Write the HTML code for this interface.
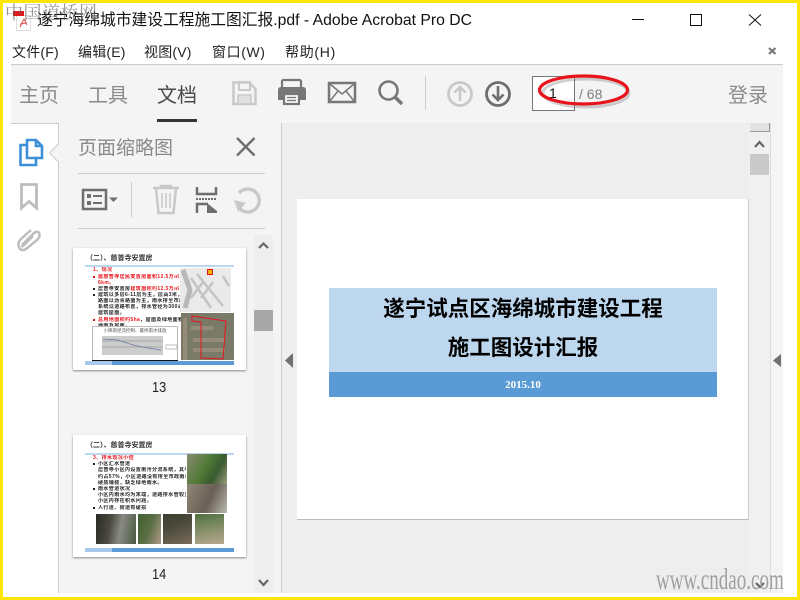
<!DOCTYPE html>
<html><head><meta charset="utf-8">
<style>
html,body{margin:0;padding:0;width:800px;height:600px;overflow:hidden;background:#fff;font-family:"Liberation Sans","Noto Sans CJK SC",sans-serif}
.a{position:absolute;white-space:nowrap}
svg{position:absolute;overflow:visible}
.t{position:absolute;left:25px;width:88px;overflow:hidden;white-space:nowrap;font-size:5px;line-height:6px;font-weight:bold;color:#222;letter-spacing:.4px}
.r{color:#e8141c}
.b{position:absolute;left:20px;width:2px;height:2px;background:#222}
</style></head><body>
<div class="a" style="left:0;top:0;width:800px;height:600px;background:#fff"></div>

<!-- title -->
<div class="a" style="left:37px;top:10px;font-size:15.750px;line-height:22px;color:#111">遂宁海绵城市建设工程施工图汇报.pdf - Adobe Acrobat Pro DC</div>
<!-- file icon -->
<div class="a" style="left:16px;top:15px;width:13px;height:14px;background:#fff;border:1px solid #ddd"></div>
<div class="a" style="left:13px;top:11px;width:11px;height:5px;background:#e8141c"></div>
<svg style="left:0;top:0" width="800" height="600"><path d="M20 27 L24 19 L27 25 M20 24 L27 23" stroke="#e05050" stroke-width="1" fill="none"/></svg>
<!-- window buttons -->
<svg style="left:0;top:0" width="800" height="600" fill="none" stroke="#111" stroke-width="1">
<path d="M632 19.5H644"/><rect x="690.5" y="14.5" width="11" height="11"/><path d="M749 14.5 L761 25.5 M761 14.5 L749 25.5"/>
<path d="M769 48 L775.500 54 M775.500 48 L769 54" stroke="#777" stroke-width="2.200"/>
</svg>
<!-- menu -->
<div class="a" style="left:12px;top:42px;font-size:14px;line-height:20px;color:#222;letter-spacing:.2px">文件(F)</div>
<div class="a" style="left:78px;top:42px;font-size:14px;line-height:20px;color:#222;letter-spacing:.2px">编辑(E)</div>
<div class="a" style="left:144px;top:42px;font-size:14px;line-height:20px;color:#222;letter-spacing:.2px">视图(V)</div>
<div class="a" style="left:212px;top:42px;font-size:14px;line-height:20px;color:#222;letter-spacing:.6px">窗口(W)</div>
<div class="a" style="left:285px;top:42px;font-size:14px;line-height:20px;color:#222;letter-spacing:.7px">帮助(H)</div>

<!-- toolbar -->
<div class="a" style="left:11px;top:64px;width:772px;height:58px;background:#f4f4f4;border-top:1px solid #ccc;border-bottom:1px solid #ccc"></div>
<div class="a" style="left:19px;top:82px;font-size:20px;line-height:28px;color:#8a8a8a">主页</div>
<div class="a" style="left:88px;top:82px;font-size:20px;line-height:28px;color:#8a8a8a">工具</div>
<div class="a" style="left:157px;top:82px;font-size:20px;line-height:28px;color:#4a4a4a">文档</div>
<div class="a" style="left:157px;top:119px;width:40px;height:3px;background:#333"></div>
<!-- toolbar icons -->
<svg style="left:0;top:0" width="800" height="600" fill="none">
<path d="M233.500 82.500H249L255.500 89V104H233.500Z" stroke="#c9c9c9" stroke-width="2.500"/>
<rect x="239" y="82" width="11" height="8" stroke="#c9c9c9" stroke-width="2"/>
<rect x="238" y="95" width="13" height="9" fill="#e0e0e0" stroke="#c9c9c9" stroke-width="1.500"/>
<rect x="282" y="80" width="19" height="9" rx="1.500" stroke="#777" stroke-width="2.200"/>
<path d="M281 87H303Q306 87 306 90V100H278V90Q278 87 281 87Z" fill="#777"/>
<rect x="284" y="94" width="15" height="10" fill="#f4f4f4" stroke="#777" stroke-width="2.200"/>
<path d="M287 97.500H296M287 100.500H296" stroke="#777" stroke-width="1.200"/>
<rect x="329" y="83" width="26" height="19" stroke="#777" stroke-width="2.500"/>
<path d="M330 84L342 94L354 84M330 101L338 91M354 101L346 91" stroke="#777" stroke-width="1.500"/>
<circle cx="388.500" cy="90.500" r="9" stroke="#777" stroke-width="2.600"/>
<path d="M395 97L402 104" stroke="#777" stroke-width="3.500"/>
<path d="M425.500 76V110" stroke="#ccc"/>
<circle cx="460" cy="94" r="11.500" stroke="#c9c9c9" stroke-width="2.800"/>
<path d="M460 101V87M454.500 92.500L460 87L465.500 92.500" stroke="#c9c9c9" stroke-width="2.600"/>
<circle cx="498" cy="94" r="11.500" stroke="#6e6e6e" stroke-width="2.800"/>
<path d="M498 86V100M492.500 94.500L498 100L503.500 94.500" stroke="#6e6e6e" stroke-width="2.600"/>
</svg>
<!-- page box -->
<div class="a" style="left:532px;top:76px;width:41px;height:33px;background:#fff;border:1px solid #777"></div>
<div class="a" style="left:549px;top:83px;font-size:14px;line-height:20px;color:#111">1</div>
<div class="a" style="left:579px;top:84px;font-size:14px;line-height:20px;color:#808080">/ 68</div>
<svg style="left:0;top:0" width="800" height="600" fill="none">
<ellipse cx="586" cy="93" rx="43" ry="14" stroke="#777" stroke-width="3" opacity=".35"/>
<ellipse cx="583.500" cy="90" rx="44" ry="14" stroke="#e8141c" stroke-width="3.200"/>
</svg>
<div class="a" style="left:728px;top:82px;font-size:20px;line-height:28px;color:#8a8a8a">登录</div>

<!-- left rail -->
<div class="a" style="left:58px;top:123px;width:1px;height:470px;background:#ccc"></div>
<svg style="left:0;top:0" width="800" height="600" fill="none">
<path d="M26 145H20.500V165H36V159" stroke="#3d8fd9" stroke-width="2.600"/>
<path d="M27 140H36L42 146V158H27Z M36 140V146H42" stroke="#3d8fd9" stroke-width="2.600" fill="#fff"/>
<path d="M21.500 184.500H36.500V208L29 201.500L21.500 208Z" stroke="#bdbdbd" stroke-width="2.800"/>
<path d="M33 236L24 245Q21 248 23 244L33 234Q37 230 39 233Q41 236 37 240L26 249Q21 252 19 247Q17 243 21 239L31 230" stroke="#bdbdbd" stroke-width="2.500"/>
</svg>

<!-- panel -->
<div class="a" style="left:59px;top:123px;width:222px;height:470px;background:#f4f4f4"></div>
<div class="a" style="left:281px;top:123px;width:1px;height:470px;background:#ccc"></div>
<svg style="left:0;top:0" width="800" height="600" fill="none">
<path d="M59 144L49.500 153L59 162Z" fill="#f4f4f4"/>
<path d="M58.500 144L49.500 153L58.500 162" stroke="#ccc"/>
</svg>
<div class="a" style="left:78px;top:136px;font-size:19px;line-height:26px;color:#8a8a8a">页面缩略图</div>
<svg style="left:0;top:0" width="800" height="600" fill="none">
<path d="M237 138L254.500 155.500M254.500 138L237 155.500" stroke="#6e6e6e" stroke-width="2.400"/>
<path d="M78 173.500H265M78 228.500H265" stroke="#ccc"/>
<rect x="83" y="190" width="23" height="19" stroke="#6e6e6e" stroke-width="2.500"/>
<path d="M87 194h4v4h-4zM87 201h4v4h-4z" fill="#6e6e6e"/>
<path d="M93 196H102M93 203H102" stroke="#6e6e6e" stroke-width="2"/>
<path d="M109 197.500H118L113.500 202Z" fill="#6e6e6e"/>
<path d="M131.500 182V217" stroke="#ccc"/>
<path d="M153 188H179M161 188V186H171V188M156 188L158.500 213H173.500L176 188" stroke="#c9c9c9" stroke-width="2.500"/>
<path d="M162 193V208M166 193V208M170 193V208" stroke="#c9c9c9" stroke-width="1.500"/>
<path d="M197 187V194H216V187" stroke="#6e6e6e" stroke-width="2.500"/>
<path d="M196 199H217" stroke="#6e6e6e" stroke-width="2" stroke-dasharray="2 1"/>
<path d="M197 213V204H208" stroke="#6e6e6e" stroke-width="2.500"/>
<path d="M207 203L217 211V213H207Z" fill="#6e6e6e"/>
<path d="M240 209A11.500 11.500 0 1 0 239 193" stroke="#c9c9c9" stroke-width="3.500"/>
<path d="M234 200L246 203L238 212Z" fill="#c9c9c9"/>
</svg>

<!-- panel scrollbar -->
<div class="a" style="left:254px;top:235px;width:19px;height:358px;background:#eee"></div>
<div class="a" style="left:254px;top:310px;width:19px;height:21px;background:#a8a8a8"></div>
<svg style="left:0;top:0" width="800" height="600" fill="none">
<path d="M259 248L263.500 243.500L268 248" stroke="#666" stroke-width="2.200"/>
<path d="M259 580L263.500 585L268 580" stroke="#666" stroke-width="2.200"/>
</svg>

<!-- thumb 13 -->
<div class="a" style="left:73px;top:248px;width:173px;height:122px;background:#fff;box-shadow:0 1px 2px #888;overflow:hidden">
 <div class="a" style="left:13px;top:6px;font-size:7px;line-height:10px;font-weight:bold;color:#333">（二）、慈普寺安置房</div>
 <div class="a" style="left:12px;top:17px;width:149px;height:2px;background:#bdd7ee"></div>
 <div class="t r" style="left:20px;top:19px">1、现况</div>
 <i class="b" style="top:28px;background:#e8141c"></i><i class="b" style="top:40px"></i><i class="b" style="top:46px"></i><i class="b" style="top:71px;background:#e8141c"></i><i class="b" style="top:83px;background:#e8141c"></i>
 <div class="t" style="top:26px"><span class="r">属慈普寺居民安置房面积12.5万㎡</span>，规划建筑面积</div>
 <div class="t r" style="top:32px">6km。</div>
 <div class="t" style="top:38px">居普寺安置房<span class="r">建筑面积约12.5万㎡</span>，规划用地</div>
 <div class="t" style="top:44px">建筑以多层6-11层为主，层高3米，绿化率35%，</div>
 <div class="t" style="top:50px">路面以沥青路面为主，雨水排至市政雨水管网，</div>
 <div class="t" style="top:56px">系统沿道路布置，排水管径为300毫米。</div>
 <div class="t" style="top:62px">建筑屋面。</div>
 <div class="t" style="top:69px"><span class="r">总用地面积约5ha</span>，屋面及绿地面积约占40%。</div>
 <div class="t" style="top:75px">地面及屋面。</div>
 <div class="t r" style="top:81px">设计雨水径流总量53mm。</div>
 <div class="a" style="left:19px;top:78px;width:86px;height:36px;background:#fff;border:1px solid #bbb;box-sizing:border-box"></div>
 <div class="a" style="left:19px;top:80px;width:86px;text-align:center;font-size:4.500px;line-height:5px;color:#555">小降雨径流控制、最终雨水排放</div>
 <div class="a" style="left:29px;top:88px;width:61px;height:19px;background:#ccc"></div>
 <svg style="left:0;top:0" width="173" height="122" fill="none"><path d="M29 93H90M29 99H90" stroke="#999" stroke-width=".7"/><path d="M30 91L45 92L60 97L75 100L88 102" stroke="#6a78a8" stroke-width=".8"/><path d="M93 97H104V101H93Z" stroke="#aaa" stroke-width=".7"/></svg>
 <div class="a" style="left:107px;top:20px;width:51px;height:44px;background:#eaeaea"></div>
 <svg style="left:0;top:0" width="173" height="122" fill="none"><path d="M118 30L138 60M124 26L150 58M130 34L118 50M140 34L128 50M150 28L156 38" stroke="#c4c4c4" stroke-width="2.500"/><path d="M110 22L117 42L112 60" stroke="#b8b8b8" stroke-width="5"/></svg>
 <div class="a" style="left:135px;top:22px;width:4px;height:4px;background:#f0b000;box-shadow:0 0 0 1px #e8141c"></div>
 <div class="a" style="left:108px;top:65px;width:53px;height:47px;background:#7a7a68"></div>
 <svg style="left:0;top:0" width="173" height="122" fill="none"><path d="M110 70H114V112H110ZM118 78H140V82H118ZM120 90H152V94H120ZM120 100H152V104H120Z" fill="#948a78"/><path d="M119 68L153 73L150 111L128 110L128 74L119 73Z" stroke="#e8141c" stroke-width="1"/></svg>
 <div class="a" style="left:12px;top:113px;width:149px;height:4px;background:#5b9bd5"></div>
 <div class="a" style="left:12px;top:113px;width:27px;height:4px;background:#a8c8ea"></div>
 <div class="a" style="left:19px;top:112px;width:86px;height:1px;background:#111"></div>
</div>
<div class="a" style="left:152px;top:378px;font-size:15px;line-height:20px;color:#222;transform:scaleX(.85);transform-origin:0 0">13</div>

<!-- thumb 14 -->
<div class="a" style="left:73px;top:435px;width:173px;height:122px;background:#fff;box-shadow:0 1px 2px #888;overflow:hidden">
 <div class="a" style="left:13px;top:6px;font-size:7px;line-height:10px;font-weight:bold;color:#333">（二）、慈普寺安置房</div>
 <div class="a" style="left:12px;top:18px;width:149px;height:2px;background:#bdd7ee"></div>
 <i class="b" style="top:28px"></i><i class="b" style="top:53px"></i><i class="b" style="top:72px"></i>
 <div class="t r" style="left:20px;top:20px">3、排水现况小结</div>
 <div class="t" style="top:26px">小区汇水管道</div>
 <div class="t" style="top:32px">居普寺小区内设置雨污分流系统，其中雨水管网</div>
 <div class="t" style="top:39px">约占57%，小区道路没有排至市政雨水，人行道，</div>
 <div class="t" style="top:45px">硬质铺装，缺乏绿地雨水。</div>
 <div class="t" style="top:51px">雨水管道状况</div>
 <div class="t" style="top:57px">小区内雨水均为末端，道路排水管较多，雨水</div>
 <div class="t" style="top:63px">小区内存在积水问题。</div>
 <div class="t" style="top:70px">人行道、街道有破损</div>
 <div class="a" style="left:114px;top:19px;width:40px;height:30px;background:linear-gradient(120deg,#8a8a70 0,#4f7a35 45%,#3a5a30 70%,#9a9a80 100%)"></div>
 <div class="a" style="left:114px;top:49px;width:40px;height:29px;background:linear-gradient(115deg,#8e8878 0,#6a5e55 55%,#b8b8b0 100%)"></div>
 <div class="a" style="left:23px;top:79px;width:40px;height:30px;background:linear-gradient(100deg,#2a2a25 0,#4a4a40 35%,#8a8a85 60%,#4a5a40 100%)"></div>
 <div class="a" style="left:65px;top:79px;width:23px;height:30px;background:linear-gradient(110deg,#3f5f30 0,#5a6f45 50%,#b09a88 100%)"></div>
 <div class="a" style="left:90px;top:79px;width:29px;height:30px;background:linear-gradient(160deg,#3c3c30 0,#4a4a3c 40%,#7a6a5a 100%)"></div>
 <div class="a" style="left:122px;top:79px;width:29px;height:30px;background:linear-gradient(170deg,#4f7040 0,#7a8a60 40%,#b8a890 100%)"></div>
 <div class="a" style="left:12px;top:113px;width:149px;height:4px;background:#5b9bd5"></div>
 <div class="a" style="left:12px;top:113px;width:27px;height:4px;background:#a8c8ea"></div>
</div>
<div class="a" style="left:152px;top:565px;font-size:15px;line-height:20px;color:#222;transform:scaleX(.85);transform-origin:0 0">14</div>

<!-- doc area -->
<div class="a" style="left:282px;top:123px;width:467px;height:470px;background:#eee"></div>
<div class="a" style="left:297px;top:199px;width:451px;height:320px;background:#fff;border-bottom:1px solid #bbb;border-right:1px solid #ccc;box-sizing:content-box"></div>
<div class="a" style="left:329px;top:288px;width:388px;height:84px;background:#bdd7ee"></div>
<div class="a" style="left:329px;top:372px;width:388px;height:25px;background:#5b9bd5"></div>
<div class="a" style="left:329px;top:294px;width:388px;text-align:center;font-size:21.500px;line-height:28px;font-weight:bold;color:#000;font-family:'Noto Sans CJK SC',sans-serif">遂宁试点区海绵城市建设工程</div>
<div class="a" style="left:329px;top:333px;width:388px;text-align:center;font-size:21.500px;line-height:28px;font-weight:bold;color:#000;font-family:'Noto Sans CJK SC',sans-serif">施工图设计汇报</div>
<div class="a" style="left:329px;top:378px;width:388px;text-align:center;font-size:11px;line-height:14px;font-weight:bold;color:#fff;font-family:'Liberation Serif',serif">2015.10</div>
<svg style="left:0;top:0" width="800" height="600">
<path d="M293 353L285 360.500L293 368Z" fill="#707070"/>
</svg>

<!-- right scrollbars -->
<div class="a" style="left:749px;top:123px;width:22px;height:470px;background:#f0f0f0;border-right:1px solid #ddd;box-sizing:border-box"></div>
<div class="a" style="left:771px;top:123px;width:12px;height:470px;background:#f4f4f4"></div>
<div class="a" style="left:750px;top:123px;width:20px;height:9px;background:#e2e2e2;border-right:1px solid #999;border-bottom:1px solid #999;box-sizing:border-box"></div>
<div class="a" style="left:750px;top:154px;width:19px;height:21px;background:#c9c9c9"></div>
<svg style="left:0;top:0" width="800" height="600" fill="none">
<path d="M755 147L759.500 142L764 147" stroke="#666" stroke-width="2.200"/>
<path d="M756 583L760 587L764 583" stroke="#666" stroke-width="2.200"/>
<path d="M781 354L773 360.500L781 367Z" fill="#707070"/>
</svg>

<!-- watermarks -->
<div class="a" style="left:5px;top:-1px;font-size:18px;line-height:26px;letter-spacing:.5px;color:rgba(90,90,90,.65);font-family:'Noto Serif CJK SC',serif">中国道桥网</div>
<div class="a" style="left:656px;top:566px;font-size:30px;line-height:28px;color:#a0a0a0;font-family:'Liberation Serif',serif;transform:scaleX(.635);transform-origin:0 0">www.cndao.com</div>

<!-- yellow frame -->
<div class="a" style="left:0;top:0;width:800px;height:3px;background:#ffe600"></div>
<div class="a" style="left:0;top:597px;width:800px;height:3px;background:#ffe600"></div>
<div class="a" style="left:0;top:0;width:3px;height:600px;background:#ffe600"></div>
<div class="a" style="left:797px;top:0;width:3px;height:600px;background:#ffe600"></div>
</body></html>
